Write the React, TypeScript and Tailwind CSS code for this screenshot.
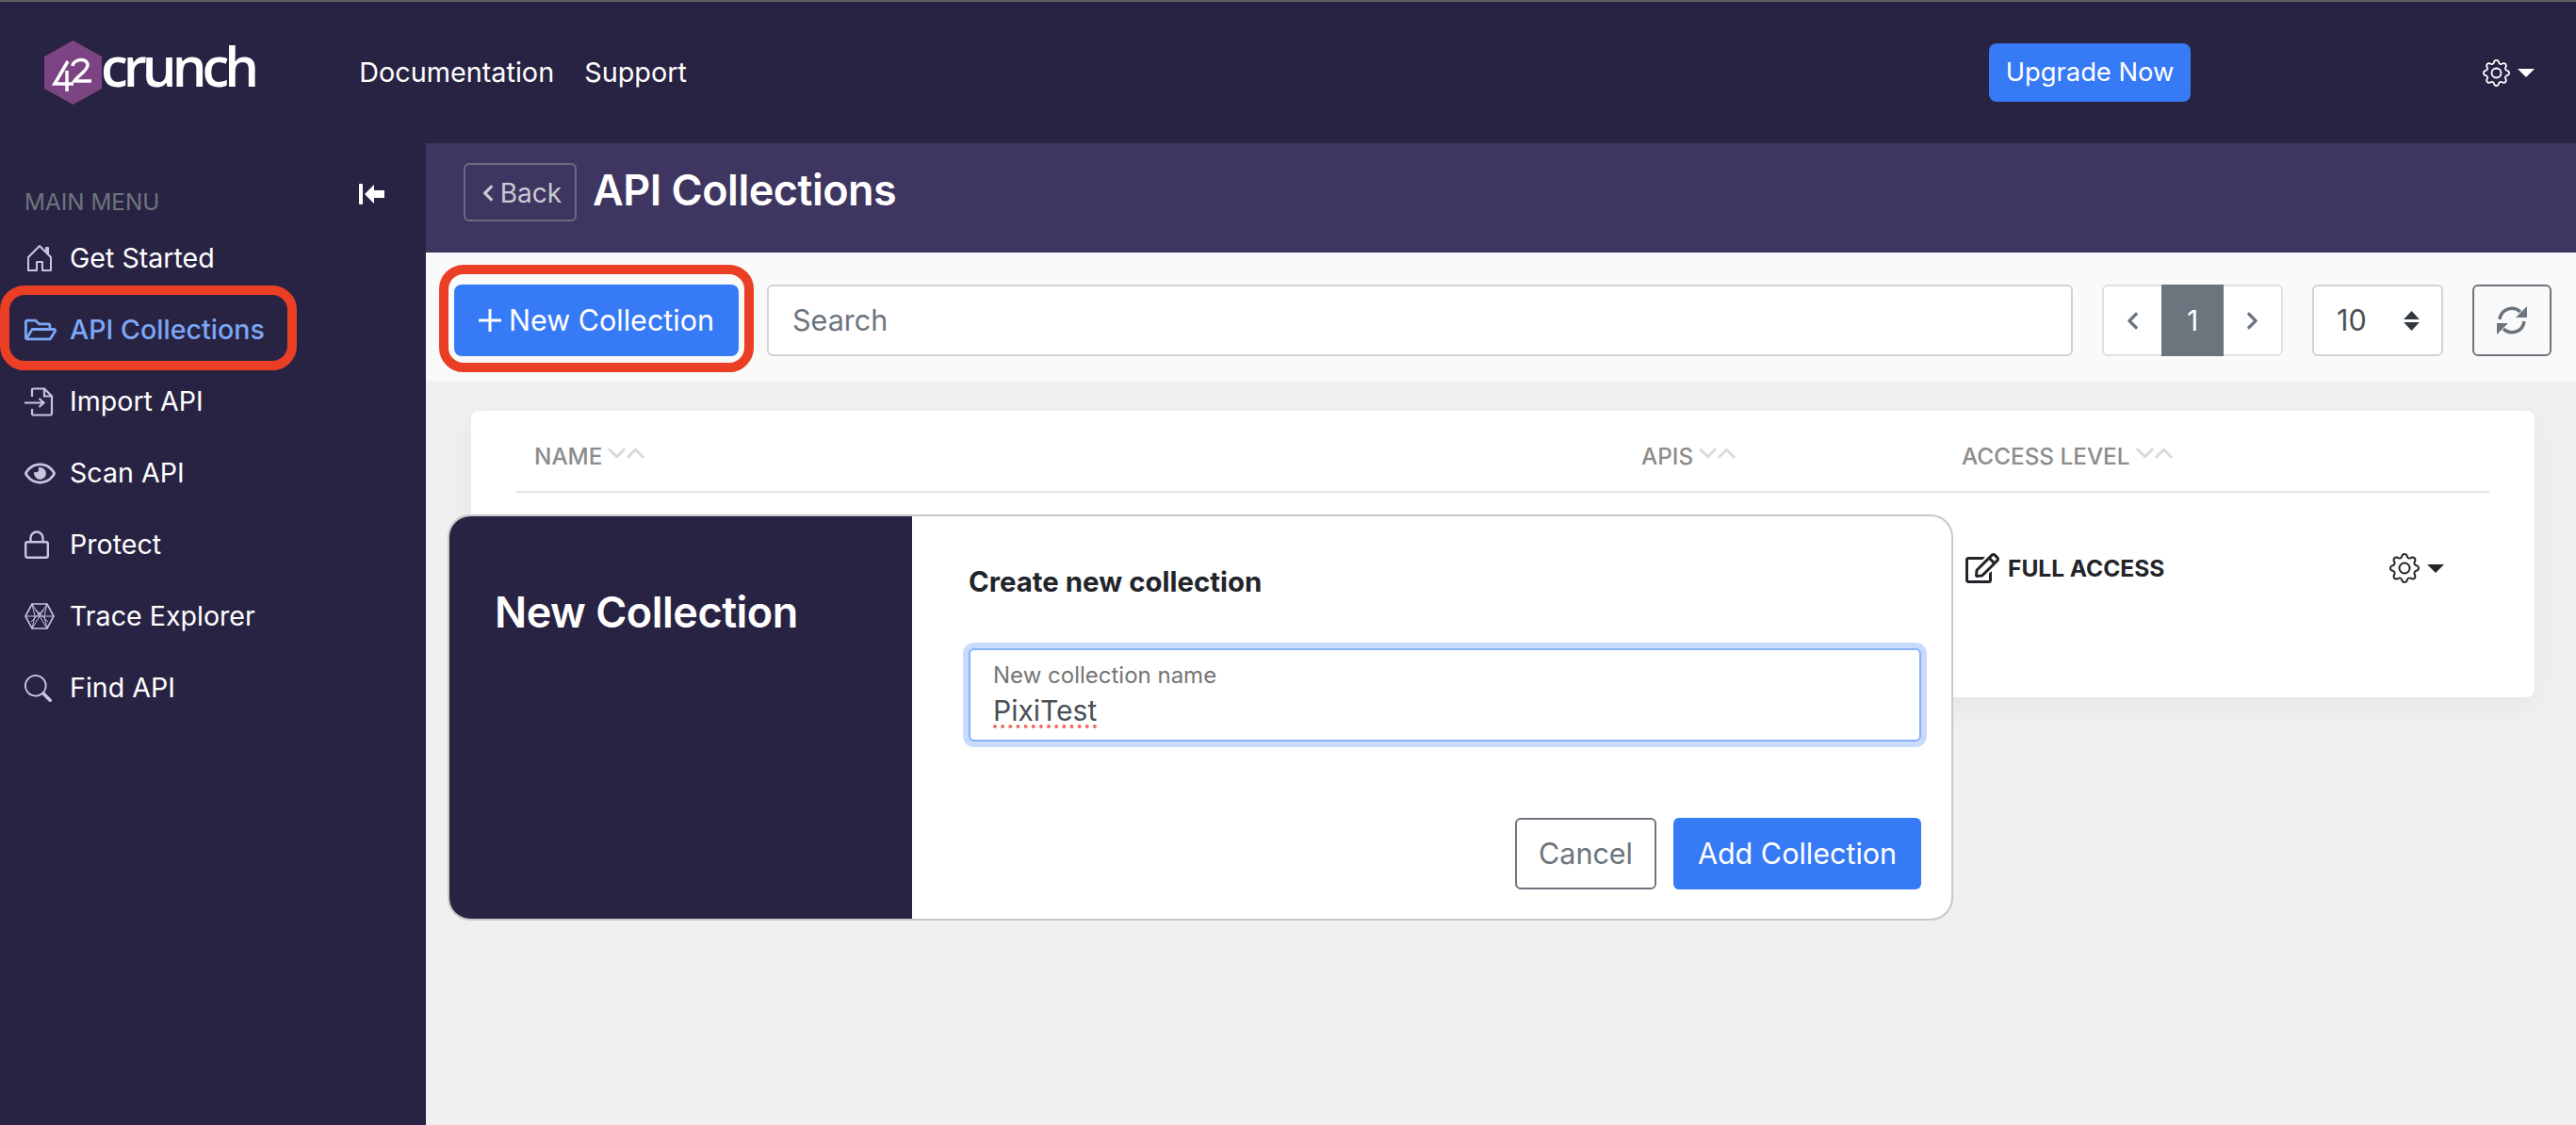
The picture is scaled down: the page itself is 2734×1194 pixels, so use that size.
import React from 'react';
import { BsGear, BsHouseDoor, BsSearch } from 'react-icons/bs';
import { FaChevronLeft, FaChevronRight, FaRegEdit, FaRegEye, FaRegFolderOpen } from 'react-icons/fa';

function Caret({ dark }: { dark?: boolean }) {
  return (
    <span
      className={`inline-block border-x-[9px] border-t-[9px] border-x-transparent ${
        dark ? 'border-t-[#212529]' : 'border-t-white'
      }`}
    />
  );
}

function SortArrows() {
  return (
    <svg viewBox="0 0 42 14" className="ml-[6px] h-[14px] w-[40px] -translate-y-[4px]" fill="none" stroke="#d9d9d9" strokeWidth="3">
      <path d="M1 2l9 9 9-9" />
      <path d="M22 12l9-9 9 9" />
    </svg>
  );
}

function ImportIcon() {
  return (
    <svg viewBox="0 0 31 31" className="h-[31px] w-[31px]" fill="none" stroke="currentColor" strokeWidth="2.2">
      <path d="M8 10V2.5a1 1 0 0 1 1-1h12l8 8V28a1.5 1.5 0 0 1-1.500 1.500H9.500A1.500 1.500 0 0 1 8 28v-5" />
      <path d="M21 1.500V9.500h8" />
      <path d="M0 16.500h20M15.500 12l5 4.500-5 4.500" />
    </svg>
  );
}

function LockIcon() {
  return (
    <svg viewBox="0 0 26 30" className="h-[30px] w-[26px]" fill="none" stroke="currentColor" strokeWidth="2.400">
      <rect x="1.200" y="12.200" width="23.600" height="16.600" rx="2" />
      <path d="M6.500 12V8a6.500 6.500 0 0 1 13 0v4" />
    </svg>
  );
}

function RefreshIcon() {
  return (
    <svg viewBox="0 0 32 32" className="h-[32px] w-[32px]" fill="none" stroke="currentColor" strokeWidth="3.500">
      <path d="M3 15A13 13 0 0 1 25 7" />
      <path d="M29 17A13 13 0 0 1 7 25" />
      <path d="M32 1v12H20z" fill="currentColor" stroke="none" />
      <path d="M0 31V19h12z" fill="currentColor" stroke="none" />
    </svg>
  );
}

function TraceIcon() {
  return (
    <svg viewBox="0 0 32 28" className="h-[28px] w-[32px]" fill="none" stroke="#c9c4df" strokeWidth="1">
      <path strokeWidth="1.600" d="M8 1h16l7 13-7 13H8L1 14z" />
      <path d="M8 1l16 26M24 1L8 27M1 14h30M8 1l3 13-3 13M24 1l-3 13 3 13M11 6l14 14M21 6L7 20" />
    </svg>
  );
}

function Logo() {
  return (
    <div className="flex items-center">
      <svg viewBox="0 0 61 68" className="h-[68px] w-[61px]">
        <path d="M30.500 0L61 17v34L30.500 68 0 51V17z" fill="#7d4484" />
        <path d="M25 22L11 46h20M24 32v22" fill="none" stroke="#fff" strokeWidth="3.500" />
        <path d="M30 27c1-8 16-9 16-1 0 6-10 11-14 17h18" fill="none" stroke="#fff" strokeWidth="3.500" />
      </svg>
      <span className="-ml-[1px] -mt-[14px] font-['Open_Sans',sans-serif] text-[58px] leading-none font-semibold tracking-[-5px] text-white">
        crunch
      </span>
    </div>
  );
}

const menu = [
  { label: 'Get Started', icon: <BsHouseDoor size={32} /> },
  { label: 'API Collections', icon: <FaRegFolderOpen size={34} />, active: true },
  { label: 'Import API', icon: <ImportIcon /> },
  { label: 'Scan API', icon: <FaRegEye size={33} /> },
  { label: 'Protect', icon: <LockIcon /> },
  { label: 'Trace Explorer', icon: <TraceIcon /> },
  { label: 'Find API', icon: <BsSearch size={29} /> },
];

function Sidebar() {
  return (
    <aside className="w-[452px] shrink-0 bg-[#292343] pl-[26px]">
      <div className="flex h-[90px] items-center pt-[30px] pr-[44px]">
        <span className="mt-[5px] text-[24.300px] text-[#6c757d]">MAIN MENU</span>
        <svg viewBox="0 0 27 22" className="-mt-[12px] ml-auto h-[22px] w-[27px]" fill="#fff">
          <rect x="0" y="0" width="4" height="22" rx="1" />
          <path d="M6 11l10-10v6h11v8H16v6z" />
        </svg>
      </div>
      <ul className="mt-[-6px] flex flex-col">
        {menu.map((item) => (
          <li
            key={item.label}
            className={`flex h-[76px] items-center text-[28.600px] ${
              item.active ? 'font-medium text-[#7ba7f7]' : 'text-white'
            }`}
          >
            <span className={`flex w-[48px] items-center ${item.active ? 'text-[#7ba7f7]' : 'text-[#c9c4df]'}`}>
              {item.icon}
            </span>
            {item.label}
          </li>
        ))}
      </ul>
    </aside>
  );
}

function Toolbar() {
  return (
    <div className="flex h-[136px] items-center bg-[#fafafa] pt-[8px] pr-[26px] pl-[30px]">
      <div className="relative">
        <button className="flex h-[76px] w-[302px] items-center justify-center gap-[8px] rounded-lg bg-[#377af6] text-[30.500px] text-white">
          <svg viewBox="0 0 24 24" className="h-[24px] w-[24px]" stroke="#fff" strokeWidth="3">
            <path d="M12 0v24M0 12h24" />
          </svg>
          New Collection
        </button>
        <div className="absolute -top-[21px] -right-[16px] -bottom-[17px] -left-[16px] rounded-[26px] border-[10px] border-[#ea3f25]" />
      </div>
      <div className="ml-[30px] flex h-[76px] flex-1 items-center rounded-md border-2 border-[#ced4da] bg-white pl-[25px] text-[30.500px] text-[#6c757d]">
        Search
      </div>
      <div className="ml-[31px] flex h-[76px] w-[192px] rounded-md border-2 border-[#dee2e6] bg-white text-[#6c757d]">
        <span className="flex flex-1 items-center justify-center">
          <FaChevronLeft size={21} />
        </span>
        <span className="-my-[2px] flex w-[66px] items-center justify-center bg-[#6c757d] text-[30px] text-white">1</span>
        <span className="flex flex-1 items-center justify-center">
          <FaChevronRight size={21} />
        </span>
      </div>
      <div className="ml-[31px] flex h-[76px] w-[139px] items-center justify-between rounded-md border-2 border-[#ced4da] bg-white pr-[23px] pl-[24px] text-[30.500px] text-[#495057]">
        10
        <svg viewBox="0 0 16 20" className="h-[21px] w-[17px]" fill="#343a40">
          <path d="M8 0l8 8.500H0zM8 20L0 11.500h16z" />
        </svg>
      </div>
      <button className="ml-[31px] flex h-[76px] w-[84px] items-center justify-center rounded-md border-2 border-[#6c757d] text-[#6c757d]">
        <RefreshIcon />
      </button>
    </div>
  );
}

function CollectionsCard() {
  return (
    <div className="mt-[32px] mr-[44px] ml-[48px] h-[304px] rounded-lg bg-white px-[48px] shadow-[0_8px_32px_rgba(0,0,0,0.05)]">
      <div className="flex h-[87px] items-center border-b-2 border-[#dee2e6] pt-[12px] pl-[19px] text-[24.300px] font-medium text-[#8c8c8c]">
        <span className="flex w-[1175px] items-center">
          NAME
          <SortArrows />
        </span>
        <span className="flex w-[340px] items-center">
          APIS
          <SortArrows />
        </span>
        <span className="flex items-center">
          ACCESS LEVEL
          <SortArrows />
        </span>
      </div>
      <div className="flex h-[160px] items-center justify-end pr-[48px]">
        <span className="flex w-[508px] items-center text-[#212529]">
          <FaRegEdit size={36} />
          <span className="ml-[9px] text-[24.500px] font-bold">FULL ACCESS</span>
          <span className="ml-auto flex items-center gap-[8px]">
            <BsGear size={32} />
            <Caret dark />
          </span>
        </span>
      </div>
    </div>
  );
}

function NewCollectionDialog() {
  return (
    <div className="absolute top-[394px] left-[23px] flex h-[431px] w-[1598px] overflow-hidden rounded-[24px] border-2 border-[#c8c8c8] bg-white">
      <div className="w-[491px] shrink-0 bg-[#292343] pt-[74px] pl-[48px] text-[45px] leading-[56px] font-semibold tracking-[-0.5px] text-white">
        New Collection
      </div>
      <div className="flex flex-1 flex-col pt-[53px] pr-[32px] pl-[60px]">
        <div className="text-[29.400px] leading-[34px] font-bold text-[#212529]">Create new collection</div>
        <div className="mt-[53px] h-[99px] rounded-md border-2 border-[#86b3f7] bg-white pt-[11px] pl-[24px] shadow-[0_0_0_6px_#c9dafc]">
          <div className="text-[24px] leading-[32px] text-[#757575]">New collection name</div>
          <div className="mt-[2px] text-[30px] leading-[38px] text-[#495057]">
            <span className="underline decoration-[#f26b5e] decoration-dotted decoration-[4px] underline-offset-[4px] [text-decoration-skip-ink:none]">
              PixiTest
            </span>
          </div>
        </div>
        <div className="mt-[81px] flex justify-end gap-[18px]">
          <button className="h-[76px] w-[150px] rounded-md border-2 border-[#6c757d] text-[30.500px] text-[#6c757d]">Cancel</button>
          <button className="h-[76px] w-[263px] rounded-md bg-[#377af6] text-[30.500px] text-white">Add Collection</button>
        </div>
      </div>
    </div>
  );
}

export default function App() {
  return (
    <div className="flex h-[1194px] flex-col overflow-hidden bg-[#f0f0f0] font-['Inter',sans-serif]">
      <div className="h-[2px] shrink-0 bg-[#5f5f5f]" />
      <header className="flex h-[150px] shrink-0 items-center bg-[#292343] pr-[44px] pl-[47px] text-[28.800px] text-white">
        <Logo />
        <nav className="ml-[111px] flex gap-[32px]">
          <span>Documentation</span>
          <span>Support</span>
        </nav>
        <button className="ml-auto flex h-[62px] w-[214px] items-center justify-center rounded-lg bg-[#377af6] text-[27.300px]">
          Upgrade Now
        </button>
        <span className="ml-[310px] flex items-center gap-[8px]">
          <BsGear size={29} />
          <Caret />
        </span>
      </header>
      <div className="flex min-h-0 flex-1">
        <Sidebar />
        <main className="relative flex-1">
          <div className="flex h-[116px] items-center gap-[17px] bg-[#3e3560] pb-[12px] pl-[40px]">
            <button className="flex h-[62px] w-[120px] items-center justify-center gap-[3px] rounded-md border-2 border-[#6c6a80] pt-[2px] text-[28px] text-[#c9c9d2]">
              <FaChevronLeft size={20} />
              Back
            </button>
            <h1 className="-mt-[5px] text-[45px] font-semibold tracking-[-0.5px] text-white">API Collections</h1>
          </div>
          <Toolbar />
          <CollectionsCard />
          <NewCollectionDialog />
        </main>
      </div>
      {/* annotation box round the active menu item */}
      <div className="absolute top-[303px] left-0 h-[90px] w-[315px] rounded-[26px] border-[10px] border-[#ea3f25]" />
    </div>
  );
}
